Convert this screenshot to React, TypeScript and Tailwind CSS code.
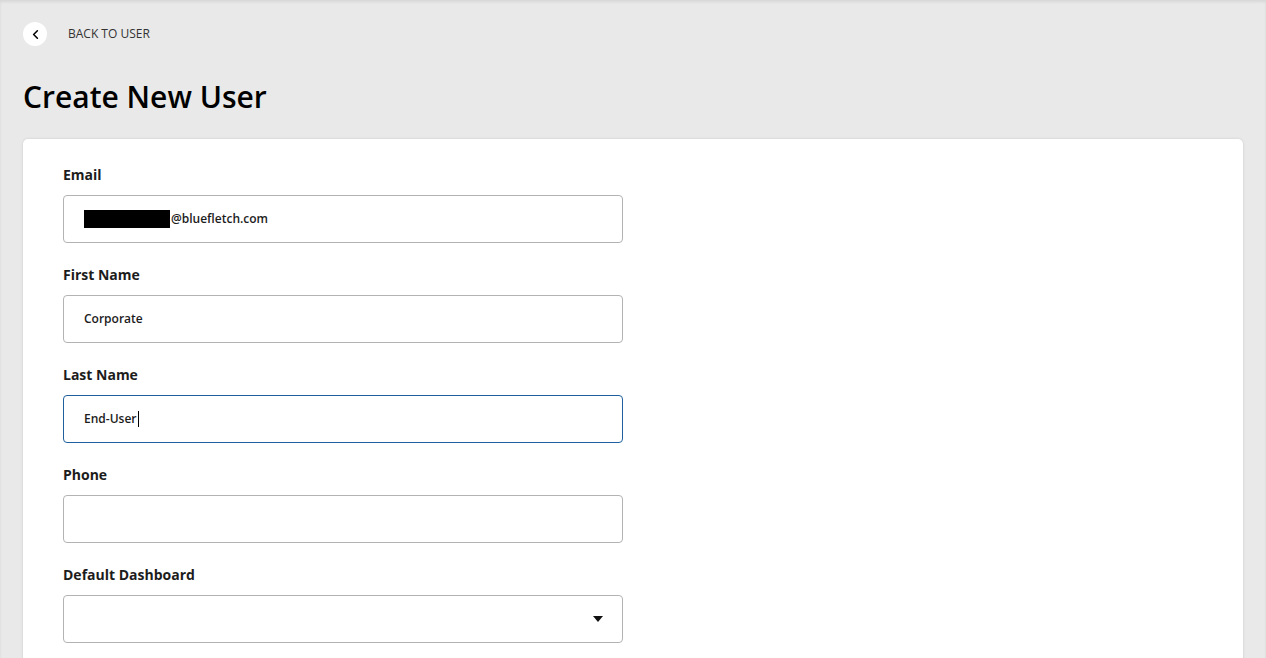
import { ChevronLeft } from 'lucide-react'

const fields = [
  { label: 'Email', value: '@bluefletch.com', redacted: true },
  { label: 'First Name', value: 'Corporate' },
  { label: 'Last Name', value: 'End-User', focused: true },
  { label: 'Phone', value: '' },
]

export default function App() {
  return (
    <div className="h-screen overflow-hidden bg-[#e9e9e9] px-[23px] font-['Open_Sans',sans-serif] text-[#1c1c1c] shadow-[inset_0_2px_3px_rgba(0,0,0,0.08)]">
      {/* Back link */}
      <div className="flex items-center gap-[21px] pt-[22px]">
        <button className="flex h-[24px] w-[24px] items-center justify-center rounded-full bg-white">
          <ChevronLeft size={15} strokeWidth={2.5} className="text-black" />
        </button>
        <span className="text-[12px] uppercase text-[#333]">Back to user</span>
      </div>

      <h1 className="mt-[31px] text-[30px] font-semibold leading-[40px] text-black">Create New User</h1>

      {/* Form card */}
      <div className="mt-[22px] rounded-[5px] bg-white pl-[40px] pt-[26px] shadow-[0_0_3px_rgba(0,0,0,0.12)]">
        {fields.map((f) => (
          <div key={f.label} className="pb-[22px]">
            <label className="block text-[14px] font-bold leading-[20px]">{f.label}</label>
            <div
              className={
                f.focused
                  ? 'mt-[10px] flex h-[48px] w-[560px] items-center rounded-[4px] border border-[#1f5f9e] px-[20px]'
                  : 'mt-[10px] flex h-[48px] w-[560px] items-center rounded-[4px] border border-[#b3b3b3] px-[20px]'
              }
            >
              {f.redacted && <span className="mr-px inline-block h-[18px] w-[86px] bg-black" />}
              <span className="text-[12px] font-semibold text-[#1c1c1c]">{f.value}</span>
              {f.focused && <span className="ml-px inline-block h-[16px] w-px bg-black" />}
            </div>
          </div>
        ))}

        <div className="pb-[22px]">
          <label className="block text-[14px] font-bold leading-[20px]">Default Dashboard</label>
          <div className="mt-[10px] flex h-[48px] w-[560px] items-center justify-end rounded-[4px] border border-[#b3b3b3] pr-[19px]">
            <svg width="10" height="6" viewBox="0 0 10 6">
              <path d="M0 0 L10 0 L5 6 Z" fill="#111" />
            </svg>
          </div>
        </div>
      </div>
    </div>
  )
}
